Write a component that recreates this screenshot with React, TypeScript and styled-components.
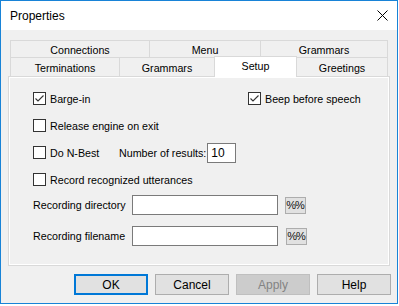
import styled, { createGlobalStyle } from "styled-components";

const GlobalStyle = createGlobalStyle`
  body {
    margin: 0;
    background: #ffffff;
    font-family: "Liberation Sans", Arial, sans-serif;
  }
`;

const Window = styled.div`
  width: 398px;
  height: 304px;
  box-sizing: border-box;
  border: 1px solid #1883d7;
  background: #f0f0f0;
  display: flex;
  flex-direction: column;
  font-size: 10.7px;
  color: #000;
`;

const TitleBar = styled.div`
  height: 29px;
  background: #ffffff;
  display: flex;
  align-items: center;
  justify-content: space-between;
  padding: 0 9px 0 9px;
  font-size: 12px;
`;

const CloseBtn = styled.div`
  width: 12px;
  height: 12px;
  display: flex;
  align-items: center;
  justify-content: center;
`;

const Body = styled.div`
  padding-top: 10px;
  display: flex;
  flex-direction: column;
`;

const TabRow = styled.div<{ $second?: boolean }>`
  display: flex;
  margin: ${({ $second }) => ($second ? "-1px 9px 0 9px" : "0 9px")};
  height: ${({ $second }) => ($second ? "19px" : "18px")};
  align-items: flex-start;
`;

const Tab = styled.div<{ $w: number; $active?: boolean; $second?: boolean }>`
  box-sizing: border-box;
  width: ${({ $w }) => $w}px;
  height: ${({ $second }) => ($second ? "19px" : "18px")};
  border: 1px solid #d9d9d9;
  border-bottom: ${({ $second }) => ($second ? "none" : "1px solid #d9d9d9")};
  background: #f0f0f0;
  display: flex;
  align-items: center;
  justify-content: center;
  padding-top: 1px;
  & + & {
    margin-left: -1px;
  }
  ${({ $active }) =>
    $active &&
    `
    position: relative;
    z-index: 1;
    background: #ffffff;
    height: 21px;
    margin-top: -1px;
    padding-top: 0;
    padding-bottom: 3px;
  `}
`;

const Panel = styled.div`
  margin: 0 7px;
  height: 190px;
  box-sizing: border-box;
  border: 1px solid #d9d9d9;
  background: #ffffff;
  padding: 1px;
`;

const Page = styled.div`
  height: 100%;
  background: #f0f0f0;
  padding: 7px 0 0 23px;
  box-sizing: border-box;
`;

const Row = styled.div<{ $cols?: string }>`
  height: 27px;
  display: grid;
  grid-template-columns: ${({ $cols }) => $cols || "auto"};
  align-items: center;
  justify-content: start;
`;

const CheckLabel = styled.label`
  display: flex;
  align-items: center;
  gap: 4px;
  white-space: nowrap;
`;

const Text = styled.span`
  white-space: nowrap;
`;

const Box = styled.span`
  width: 13px;
  height: 13px;
  box-sizing: border-box;
  border: 1px solid #333333;
  background: #ffffff;
  display: flex;
  align-items: center;
  justify-content: center;
`;

const Field = styled.div<{ $w: number; $gap?: number }>`
  width: ${({ $w }) => $w}px;
  height: 20px;
  box-sizing: border-box;
  border: 1px solid #7a7a7a;
  background: #ffffff;
  padding: 0 3px;
  margin-left: ${({ $gap }) => $gap || 0}px;
  display: flex;
  align-items: center;
  font-size: 12px;
`;

const InputGroup = styled.div`
  display: flex;
  flex-direction: column;
  gap: 11px;
  padding-top: 2px;
`;

const InputRow = styled.div`
  display: grid;
  grid-template-columns: 99px 146px auto;
  align-items: center;
  height: 20px;
`;

const SmallBtn = styled.div<{ $shift?: number }>`
  width: 21px;
  height: 17px;
  box-sizing: border-box;
  border: 1px solid #adadad;
  background: #e1e1e1;
  margin-left: ${({ $shift }) => 7 + ($shift || 0)}px;
  display: flex;
  align-items: center;
  justify-content: center;
  font-family: "Liberation Sans", sans-serif;
  font-size: 11px;
  letter-spacing: -1px;
  padding-right: 1px;
  color: #111;
`;

const Footer = styled.div`
  display: flex;
  justify-content: flex-end;
  gap: 7px;
  padding: 8px 6px 0 0;
`;

const Button = styled.div<{ $default?: boolean; $disabled?: boolean }>`
  width: 74px;
  height: 21px;
  box-sizing: border-box;
  border: ${({ $default, $disabled }) =>
    $default ? "2px solid #0078d7" : $disabled ? "1px solid #bfbfbf" : "1px solid #adadad"};
  background: ${({ $disabled }) => ($disabled ? "#cccccc" : "#e1e1e1")};
  color: ${({ $disabled }) => ($disabled ? "#838383" : "#000")};
  display: flex;
  align-items: center;
  justify-content: center;
  font-size: 12px;
`;

const Check = () => (
  <svg width="11" height="11" viewBox="0 0 11 11">
    <polyline points="1.5,5.5 4,8 9.5,2.5" fill="none" stroke="#333" strokeWidth="1.1" />
  </svg>
);

const Checkbox = ({ label, checked }: { label: string; checked?: boolean }) => (
  <CheckLabel>
    <Box>{checked && <Check />}</Box>
    {label}
  </CheckLabel>
);

export default function App() {
  return (
    <>
      <GlobalStyle />
      <Window>
        <TitleBar>
          <span>Properties</span>
          <CloseBtn>
            <svg width="11" height="11" viewBox="0 0 11 11">
              <path d="M0.5 0.5 L10.5 10.5 M10.5 0.5 L0.5 10.5" stroke="#000" strokeWidth="1" />
            </svg>
          </CloseBtn>
        </TitleBar>
        <Body>
          <TabRow>
            <Tab $w={140}>Connections</Tab>
            <Tab $w={112}>Menu</Tab>
            <Tab $w={128}>Grammars</Tab>
          </TabRow>
          <TabRow $second>
            <Tab $second $w={110}>Terminations</Tab>
            <Tab $second $w={96}>Grammars</Tab>
            <Tab $second $active $w={83}>Setup</Tab>
            <Tab $second $w={92}>Greetings</Tab>
          </TabRow>
          <Panel>
            <Page>
              <Row $cols="215px auto">
                <Checkbox label="Barge-in" checked />
                <Checkbox label="Beep before speech" checked />
              </Row>
              <Row>
                <Checkbox label="Release engine on exit" />
              </Row>
              <Row $cols="86px auto auto">
                <Checkbox label="Do N-Best" />
                <Text>Number of results:</Text>
                <Field $w={29} $gap={1}>10</Field>
              </Row>
              <Row>
                <Checkbox label="Record recognized utterances" />
              </Row>
              <InputGroup>
                <InputRow>
                  <Text>Recording directory</Text>
                  <Field $w={146} />
                  <SmallBtn>%%</SmallBtn>
                </InputRow>
                <InputRow>
                  <Text>Recording filename</Text>
                  <Field $w={146} />
                  <SmallBtn $shift={1}>%%</SmallBtn>
                </InputRow>
              </InputGroup>
            </Page>
          </Panel>
          <Footer>
            <Button $default>OK</Button>
            <Button>Cancel</Button>
            <Button $disabled>Apply</Button>
            <Button>Help</Button>
          </Footer>
        </Body>
      </Window>
    </>
  );
}
